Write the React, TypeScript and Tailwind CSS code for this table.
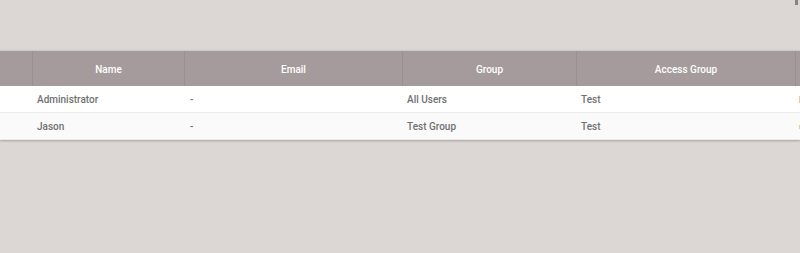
const cols = [
  { label: "", w: "w-[33px]" },
  { label: "Name", w: "w-[152px]" },
  { label: "Email", w: "w-[218px]" },
  { label: "Group", w: "w-[174px]" },
  { label: "Access Group", w: "w-[219px]" },
  { label: "", w: "w-[60px]" },
];

const rows = [
  { name: "Administrator", email: "-", group: "All Users", access: "Test", bg: "bg-white" },
  { name: "Jason", email: "-", group: "Test Group", access: "Test", bg: "bg-[#fafafa]" },
];

export default function App() {
  return (
    <div className="h-[253px] w-[800px] overflow-hidden bg-[#dcd7d4] font-['Roboto',sans-serif]">
      <div className="relative h-[50px]">
        <div className="absolute right-[2px] top-0 h-[5px] w-[3px] bg-[#8a8282]" />
      </div>
      <div className="border-t border-[#cfc9c6] shadow-[0_1px_2px_rgba(0,0,0,0.25)]">
        <div className="flex h-[35px] w-[856px] bg-[#a59b9c]">
          {cols.map((c, i) => (
            <div
              key={i}
              className={`${c.w} flex shrink-0 items-center justify-center border-r border-[#9a9091] pt-[2px] text-[10px] font-medium text-white`}
            >
              {c.label}
            </div>
          ))}
        </div>
        {rows.map((r, i) => (
          <div key={i} className={`flex h-[27px] w-[856px] ${r.bg} border-b border-[#ececec] pt-[1px] text-[10px] font-medium text-[#707070]`}>
            <div className="w-[33px] shrink-0" />
            <div className="flex w-[152px] shrink-0 items-center pl-[4px]">{r.name}</div>
            <div className="flex w-[218px] shrink-0 items-center pl-[5px]">{r.email}</div>
            <div className="flex w-[174px] shrink-0 items-center pl-[4px]">{r.group}</div>
            <div className="flex w-[219px] shrink-0 items-center pl-[4px]">{r.access}</div>
            <div className="flex w-[60px] shrink-0 items-center pl-[3px]">
              <div className={`w-[2px] bg-[#f0c890] ${i === 0 ? "h-[7px]" : "h-[4px]"}`} />
            </div>
          </div>
        ))}
      </div>
    </div>
  );
}
